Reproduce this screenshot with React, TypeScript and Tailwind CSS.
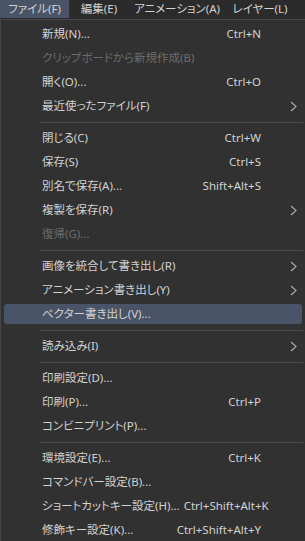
import React from 'react';

type Item =
  | { type: 'sep' }
  | { type: 'item'; label: string; shortcut?: string; sub?: boolean; disabled?: boolean; active?: boolean };

const tabs = [
  { label: 'ファイル(F)', w: 'w-[69px]' },
  { label: '編集(E)', w: 'w-[60px]' },
  { label: 'アニメーション(A)', w: 'w-[96px]' },
  { label: 'レイヤー(L)', w: 'w-[70px]' },
];

const items: Item[] = [
  { type: 'item', label: '新規(N)...', shortcut: 'Ctrl+N' },
  { type: 'item', label: 'クリップボードから新規作成(B)', disabled: true },
  { type: 'item', label: '開く(O)...', shortcut: 'Ctrl+O' },
  { type: 'item', label: '最近使ったファイル(F)', sub: true },
  { type: 'sep' },
  { type: 'item', label: '閉じる(C)', shortcut: 'Ctrl+W' },
  { type: 'item', label: '保存(S)', shortcut: 'Ctrl+S' },
  { type: 'item', label: '別名で保存(A)...', shortcut: 'Shift+Alt+S' },
  { type: 'item', label: '複製を保存(R)', sub: true },
  { type: 'item', label: '復帰(G)...', disabled: true },
  { type: 'sep' },
  { type: 'item', label: '画像を統合して書き出し(R)', sub: true },
  { type: 'item', label: 'アニメーション書き出し(Y)', sub: true },
  { type: 'item', label: 'ベクター書き出し(V)...', active: true },
  { type: 'sep' },
  { type: 'item', label: '読み込み(I)', sub: true },
  { type: 'sep' },
  { type: 'item', label: '印刷設定(D)...' },
  { type: 'item', label: '印刷(P)...', shortcut: 'Ctrl+P' },
  { type: 'item', label: 'コンビニプリント(P)...' },
  { type: 'sep' },
  { type: 'item', label: '環境設定(E)...', shortcut: 'Ctrl+K' },
  { type: 'item', label: 'コマンドバー設定(B)...' },
  { type: 'item', label: 'ショートカットキー設定(H)...', shortcut: 'Ctrl+Shift+Alt+K' },
  { type: 'item', label: '修飾キー設定(K)...', shortcut: 'Ctrl+Shift+Alt+Y' },
];

const Chevron = () => (
  <svg width="7" height="11" viewBox="0 0 7 11" fill="none">
    <polyline points="1,1 6,5.5 1,10" stroke="#a8a8a8" strokeWidth="1.2" />
  </svg>
);

export default function App() {
  return (
    <div className="w-[305px] h-[541px] overflow-hidden bg-[#2b2b2b] text-[11.5px] text-[#d2d2d2] font-['Noto_Sans','Noto_Sans_CJK_JP',sans-serif] [font-feature-settings:'palt']">
      <div className="flex h-[19px] items-start">
        {tabs.map((t, i) => (
          <div
            key={t.label}
            className={
              'flex h-[18px] shrink-0 items-center justify-center whitespace-nowrap leading-none ' +
              t.w +
              (i === 0 ? ' bg-[#4a5468]' : '')
            }
          >
            {t.label}
          </div>
        ))}
      </div>
      <div className="h-[522px] border-l border-t border-[#464646] bg-[#313131] pt-[2px]">
        {items.map((it, i) =>
          it.type === 'sep' ? (
            <div key={i} className="flex h-[8px] items-center pl-[39px] pr-[2px]">
              <div className="h-px w-full bg-[#4a4a4a]" />
            </div>
          ) : (
            <div key={i} className="h-[24px] py-[2px] pl-[3px] pr-[3px]">
              <div
                className={
                  'flex h-full items-center gap-[4px] rounded-[3px] pl-[38px] ' +
                  (it.active ? 'bg-[#4a5468] ' : '') +
                  (it.disabled ? 'text-[#6c6c6c]' : '')
                }
              >
                <span className="flex-1 whitespace-nowrap">{it.label}</span>
                {it.shortcut && <span className="whitespace-nowrap">{it.shortcut}</span>}
                <span className="flex w-[37px] items-center pl-[25px]">{it.sub && <Chevron />}</span>
              </div>
            </div>
          )
        )}
      </div>
    </div>
  );
}
